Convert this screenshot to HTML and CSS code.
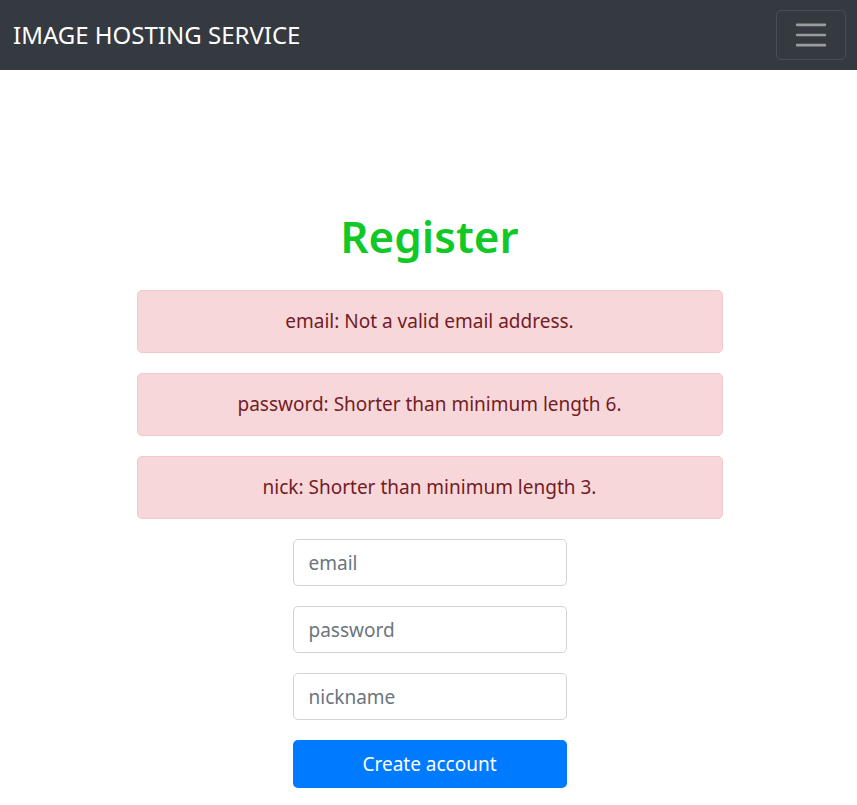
FILE: index.html
```html
<!DOCTYPE html>
<html lang="en">
<head>
<meta charset="utf-8">
<title>Register</title>
<link rel="stylesheet" href="styles.css">
</head>
<body>
<nav class="navbar">
  <a class="brand" href="#">IMAGE HOSTING SERVICE</a>
  <button class="toggler" type="button" aria-label="Toggle navigation">
    <svg width="30" height="30" viewBox="0 0 30 30"><path stroke="rgba(255,255,255,0.5)" stroke-width="2" stroke-linecap="round" d="M4 7h22M4 15h22M4 23h22"/></svg>
  </button>
</nav>
<main class="main">
  <h1 class="title">Register</h1>
  <div class="alerts">
    <div class="alert">email: Not a valid email address.</div>
    <div class="alert">password: Shorter than minimum length 6.</div>
    <div class="alert">nick: Shorter than minimum length 3.</div>
  </div>
  <form class="form">
    <input class="input" type="text" placeholder="email">
    <input class="input" type="password" placeholder="password">
    <input class="input" type="text" placeholder="nickname">
    <button class="btn" type="button">Create account</button>
  </form>
</main>
</body>
</html>
```
FILE: styles.css
```css
* { box-sizing: border-box; }
html, body { margin: 0; padding: 0; }
body {
  font-family: "Noto Sans", "Open Sans", "Liberation Sans", sans-serif;
  font-size: 19px;
  line-height: 1.5;
  color: #212529;
  background: #fff;
}
.navbar {
  height: 70px;
  background: #343a40;
  display: flex;
  align-items: center;
  justify-content: space-between;
  padding: 0 11px 0 13px;
}
.brand {
  color: #fff;
  text-decoration: none;
  font-size: 24px;
  line-height: 1;
}
.toggler {
  width: 70px;
  height: 50px;
  margin-top: -1px;
  background: transparent;
  border: 1px solid rgba(255,255,255,0.1);
  border-radius: 5px;
  display: flex;
  align-items: center;
  justify-content: center;
  padding: 0;
}
.toggler svg { width: 38px; height: 38px; }
.main {
  display: flex;
  flex-direction: column;
  align-items: center;
  padding: 136px 0 0 2px;
}
.title {
  margin: 0 0 24px;
  font-size: 44px;
  font-weight: 600;
  line-height: 60px;
  color: #11c926;
  height: 60px;
}
.alerts {
  width: 586px;
  display: flex;
  flex-direction: column;
  gap: 20px;
}
.alert {
  background: #f8d7da;
  border: 1px solid #f5c6cb;
  color: #721c24;
  border-radius: 5px;
  padding: 15px 25px;
  text-align: center;
  line-height: 30px;
  height: 63px;
}
.form {
  width: 274px;
  margin-top: 20px;
  display: flex;
  flex-direction: column;
  gap: 20px;
}
.input {
  height: 47px;
  border: 1px solid #ced4da;
  border-radius: 5px;
  padding: 0 15px;
  font: inherit;
  color: #495057;
}
.input::placeholder { color: #6c757d; }
.btn {
  height: 48px;
  border: none;
  background: #007bff;
  color: #fff;
  border-radius: 5px;
  font: inherit;
}
```
